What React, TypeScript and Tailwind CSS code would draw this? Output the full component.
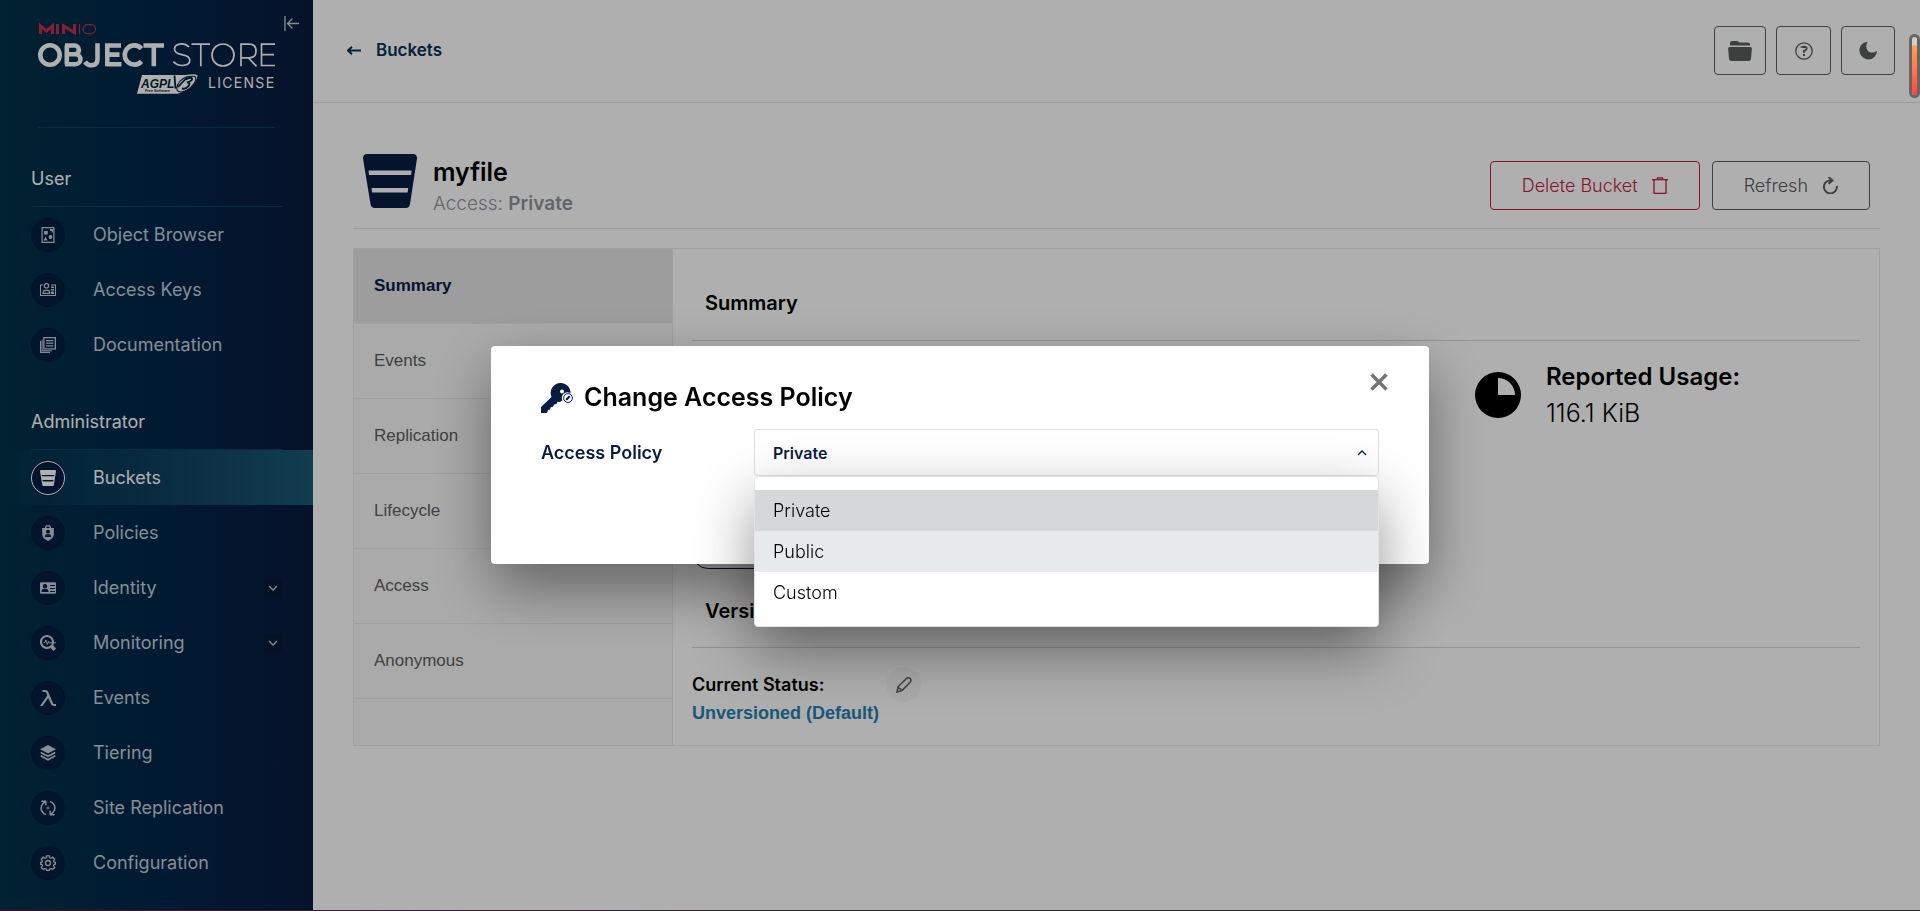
import { useState, type ReactNode } from "react";

const NAVY = "#081C42";

function BucketIcon({ className }: { className?: string }) {
  return (
    <svg viewBox="0 0 54 54" className={className} fill="currentColor" aria-hidden="true">
      <path
        fillRule="evenodd"
        d="M4 0h46a4 4 0 0 1 4 4.500L47 50a4.500 4.500 0 0 1-4.500 4H12a4.500 4.500 0 0 1-4.500-4L0 4.500A4 4 0 0 1 4 0ZM5.500 16.500l.6 4.500h42l.6-4.500ZM8.500 34l.6 4.500h35.500l.6-4.500Z"
      />
    </svg>
  );
}

function Svg({ children, className = "size-4", box = "0 0 16 16" }: { children: ReactNode; className?: string; box?: string }) {
  return (
    <svg viewBox={box} className={className} fill="currentColor" aria-hidden="true">
      {children}
    </svg>
  );
}

const icons: Record<string, ReactNode> = {
  "Object Browser": (
    <Svg>
      <path fillRule="evenodd" d="M1.500 0h13v16h-13ZM2.700 1.200v13.600h10.600V1.200Z" />
      <path d="M4 4h3.800v3.500H4ZM3.500 13.500l2-3.700 2 3.700ZM10 2h3v3.500h-1.200V4H10Z" />
      <circle cx="10.500" cy="10" r="1.900" />
    </Svg>
  ),
  "Access Keys": (
    <Svg>
      <path d="M0 2.500h3v1H1v9.500h14V3.500h-4v-1h5V14H0Z" />
      <path fillRule="evenodd" d="M6.500 1a2.800 2.800 0 1 1 0 5.600 2.800 2.800 0 0 1 0-5.600Zm0 1.200a1.600 1.600 0 1 0 0 3.200 1.600 1.600 0 0 0 0-3.200ZM2.500 12V10q.5-2.200 2.500-2.200h3q2 0 2.300 2.200v2Zm1.200-1.200H9q0-1.800-1.200-1.800H5.200q-1.500 0-1.500 1.800Z" />
      <path d="M11 4.500h3V6h-3ZM11 7h3v1.500h-3ZM11 9.500h3V12h-3Z" />
    </Svg>
  ),
  Documentation: (
    <Svg>
      <path fillRule="evenodd" d="M3.200 0H16v12.500H3.200ZM4.500 1.300v9.900h10.200V1.300Z" />
      <path d="M6 3h7.300v1.200H6ZM6 5.600h7.300v1.200H6ZM6 8.200h7.300v1.200H6ZM0 4h1.200v10.800H10V16H0ZM1.700 2.500H2.600v10.800H12v1H1.700Z" />
    </Svg>
  ),
  Buckets: <BucketIcon className="size-4" />,
  Policies: (
    <Svg>
      <path d="M5 3.500V3a3 3 0 0 1 6 0v.5H9.800V3a1.800 1.800 0 0 0-3.600 0v.5Z" />
      <path fillRule="evenodd" d="M2.200 3h11.600v6.500c0 3-2.500 5-5.800 6.500-3.300-1.500-5.800-3.500-5.800-6.500ZM8 4.800a2 2 0 1 0 0 4 2 2 0 0 0 0-4ZM4.800 12h6.400q0-2.500-1.700-2.700h-3Q4.800 9.500 4.800 12Z" />
    </Svg>
  ),
  Identity: (
    <Svg>
      <path fillRule="evenodd" d="M1 2.200h14a1 1 0 0 1 1 1v9.600a1 1 0 0 1-1 1H1a1 1 0 0 1-1-1V3.200a1 1 0 0 1 1-1ZM5 4a2.200 2.200 0 1 0 0 4.400A2.200 2.200 0 0 0 5 4ZM1.500 12h7q0-3-2-3h-3q-2 0-2 3ZM10 5v1h5V5Zm0 3v1h5V8Zm0 3v1h5v-1Z" />
    </Svg>
  ),
  Monitoring: (
    <Svg>
      <path fillRule="evenodd" d="M7 0a7 7 0 0 1 6.200 10.200L16 13.500 13.700 16l-3.200-3A7 7 0 1 1 7 0Zm0 2a5 5 0 1 0 0 10A5 5 0 0 0 7 2Z" />
      <path d="M3.500 7.500h1.300L6 5l1.300 4.500 1.400-3 .7 1.300H16" fill="none" stroke="currentColor" />
    </Svg>
  ),
  Events: (
    <Svg>
      <path d="M2.500 0H6q1.300 0 2 1.600l4.800 11.200q.4 1.200 1.600 1.200H16v2h-2.500q-1.700 0-2.500-1.800L8.200 8 2.500 16H0L7.200 5.600 6.400 3q-.4-1-1.400-1H2.500Z" />
    </Svg>
  ),
  Tiering: (
    <Svg>
      <path d="M8 0l8 4.200-8 4.300-8-4.300Z" />
      <path d="M.8 7.500 8 11.300l7.200-3.800M.8 10.800 8 14.800l7.200-4" fill="none" stroke="currentColor" strokeWidth="1.600" />
    </Svg>
  ),
  "Site Replication": (
    <Svg>
      <path d="M6 14.500C2 13.500 0 9 1.800 5.500 2.500 4 3.500 3 4.800 2.200M10 1.500c4 1 6 5.500 4.200 9-.7 1.500-1.700 2.500-3 3.300M1.500 1.200h4.300v4M14.500 14.800h-4.300v-4" fill="none" stroke="currentColor" strokeWidth="1.500" />
      <path d="M7.500 6.500h1v1h1v1h-1v1h-1v-1h-1v-1h1Z" />
    </Svg>
  ),
  Configuration: (
    <Svg>
      <g fill="none" stroke="currentColor" strokeWidth="1.300">
        <circle cx="8" cy="8" r="2.500" />
        <path d="M6.600 .8h2.800l.4 2 1.200.5 1.700-1.100 2 2-1.100 1.700.5 1.200 1.300.3v1.800l-1.300.4-.5 1.200 1.100 1.700-2 2-1.700-1.100-1.200.5-.4 1.500H6.600l-.4-1.500-1.200-.5-1.700 1.100-2-2 1.100-1.700-.5-1.200L.6 9.200V7.400l1.300-.3.5-1.200-1.100-1.700 2-2L5 3.300l1.200-.5Z" />
      </g>
    </Svg>
  ),
};

function NavItem({ name, active, expandable }: { name: string; active?: boolean; expandable?: boolean }) {
  return (
    <a
      href="#"
      className={
        active
          ? "flex h-[55px] items-center bg-linear-to-r from-[#1a5a7400] to-[#1a5a74] px-[31px] text-white"
          : "flex h-[55px] items-center px-[31px] text-[#c4cedb]"
      }
    >
      <span
        className={
          active
            ? "flex size-[34px] items-center justify-center rounded-full border border-white bg-[#021c44]"
            : "flex size-[34px] items-center justify-center rounded-full border border-[#041a3a] bg-[#041f42]"
        }
      >
        {icons[name]}
      </span>
      <span className="ml-7 flex-1 text-lg">{name}</span>
      {expandable && (
        <span className="flex size-[18px] items-center justify-center rounded-xs bg-[#081a37]">
          <Svg className="size-[10px]" box="0 0 10 10">
            <path d="M1 3l4 4 4-4" fill="none" stroke="currentColor" strokeWidth="1.300" />
          </Svg>
        </span>
      )}
    </a>
  );
}

function Logo() {
  return (
    <svg viewBox="0 0 237 72" className="h-[72px] w-full overflow-visible" role="img" aria-label="MinIO Object Store AGPL v3 License">
      <g fill="none" stroke="#c72c48">
        <path strokeWidth="3" d="M2.500 10V2l6 5 6-5v8M19.500 0v10M25.500 10V2l11 6.500V0" />
        <path strokeWidth="1" d="M41.500 0v10" />
        <rect x="45" y=".6" width="12.500" height="9" rx="4.500" strokeWidth="1.200" />
      </g>
      <g fill="none" stroke="#fff" strokeWidth="4.600">
        <circle cx="12" cy="31" r="9.700" />
        <path d="M28.800 21.500v19M27 21.500h9.500a4.300 4.300 0 0 1 0 8.800H28h9.500a4.700 4.700 0 0 1 0 9.900H27M59.500 19.300v16q0 6-6 6-4 0-6.500-3.500M69.300 19.300v23M83 21.500H69M81.500 30.600H69M83.500 40.200H69M103.500 24.600a9.600 9.600 0 1 0 0 12.800M105.500 21.500h20.500M115.800 21.500v20.800" />
      </g>
      <g fill="none" stroke="#fff" strokeWidth="1.700">
        <path d="M151 23q-3-3.300-7.500-3.200-7 .3-7 5.300 0 4.300 7.300 5.500 8 1.200 8 5.700 0 5-7.500 5.200-5.500 0-9-4M153.500 20.200h18.500M162.800 20.200v22M203 42.300V20.200h8q7 0 7 6.800t-7 6.800h-8M210.500 34l8 8.300M237 20.200h-13.500v21.300H237M223.500 30.600H236" />
        <circle cx="185" cy="31" r="11" />
      </g>
      <path fill="#fff" d="M104 51h43q13-2 12.500 1-3 14-20 17.700H99Z" />
      <text x="103" y="63.500" fill="#001c38" fontFamily="Liberation Sans, sans-serif" fontSize="12" fontStyle="italic" fontWeight="700">
        AGPL
      </text>
      <path fill="none" stroke="#001c38" strokeWidth="1.800" d="M136.500 51.500l1 13M140 63l9-9.500" />
      <path fill="none" stroke="#001c38" strokeWidth="1.100" d="M157 52.500q-12-2-17.500 8.500-2.500 7 3.500 7 7-.5 13-8.500 3-5 1-7" />
      <path fill="none" stroke="#001c38" strokeWidth="1.900" d="M147.500 55.500q6-3 6.500-.8t-5 3.700q4 .2 1.500 3.600t-6.500 2.500" />
      <text x="107" y="68.300" fill="#001c38" fontFamily="Liberation Sans, sans-serif" fontSize="3.800" fontWeight="700">
        Free Software
      </text>
      <text x="170" y="64" fill="#fff" fontFamily="Inter, sans-serif" fontSize="14" letterSpacing="1.300">
        LICENSE
      </text>
    </svg>
  );
}

function Sidebar() {
  return (
    <aside className="flex w-[313px] shrink-0 flex-col bg-linear-to-r from-[#00324a] via-[#00264a] to-[#0a1b3e]">
      <div className="relative px-[38px] pt-6">
        <Logo />
        <button type="button" aria-label="Collapse menu" className="absolute top-4 right-[14px] text-[#c4cedb]">
          <Svg className="size-[15px]" box="0 0 15 15">
            <path d="M1 0v15M3.500 7.500H15M8.500 2.500l-5 5 5 5" fill="none" stroke="currentColor" strokeWidth="1.300" />
          </Svg>
        </button>
        <hr className="mt-[31px] border-[#0a4262]" />
      </div>
      <nav>
        <h2 className="mx-[31px] mt-[38px] h-[41px] border-b border-[#0a4262] text-lg leading-[26px] text-white">User</h2>
        <NavItem name="Object Browser" />
        <NavItem name="Access Keys" />
        <NavItem name="Documentation" />
        <h2 className="mx-[31px] mt-9 h-[42px] border-b border-[#0a4262] text-lg leading-[27px] text-white">Administrator</h2>
        <NavItem name="Buckets" active />
        <NavItem name="Policies" />
        <NavItem name="Identity" expandable />
        <NavItem name="Monitoring" expandable />
        <NavItem name="Events" />
        <NavItem name="Tiering" />
        <NavItem name="Site Replication" />
        <NavItem name="Configuration" />
      </nav>
    </aside>
  );
}

function TopBar() {
  const button = "flex h-[49px] items-center justify-center rounded-sm border border-[#5e5e5e] text-[#5a5c5c]";
  return (
    <header className="flex h-[103px] items-center justify-between border-b border-[#e2e2e2] pr-[25px] pb-px pl-[34px]">
      <a href="#" className="flex items-center gap-[15px] text-[17px] font-semibold text-[#073052]">
        <Svg className="h-[9px] w-[14px]" box="0 0 14 9">
          <path d="M1 4.500h13M5 .8l-4 3.700 4 3.700" fill="none" stroke="currentColor" strokeWidth="2" />
        </Svg>
        Buckets
      </a>
      <div className="flex gap-[10px]">
        <button type="button" aria-label="Downloads" className={`w-[52px] ${button}`}>
          <Svg className="h-[20px] w-6" box="0 0 24 20">
            <path d="M2 4.500V2Q2.200 0 4 0h5q1.500 0 2 1.500h9q2 0 2.200 3Z" />
            <path d="M1.500 6h21q1.500 0 1.400 1.500L23 18q-.2 2-2 2H3.200q-2 0-2.200-2L.1 7.500Q0 6 1.500 6Z" />
          </Svg>
        </button>
        <button type="button" aria-label="Help" className={`w-[55px] ${button}`}>
          <Svg className="size-[18px]" box="0 0 18 18">
            <circle cx="9" cy="9" r="8.200" fill="none" stroke="currentColor" strokeWidth="1.300" />
            <path d="M6.500 5.700q0-.8 2.500-.9 2.800 0 2.600 2-.1 1.400-2.600 2.200v1.700" fill="none" stroke="currentColor" strokeWidth="2" />
            <path d="M8 12h2v2H8Z" />
          </Svg>
        </button>
        <button type="button" aria-label="Dark mode" className={`w-[54px] ${button}`}>
          <Svg className="size-[18px]" box="0 0 18 18">
            <path d="M8.500 0C0 .5-2 10 3.500 15c5 4.800 13.500 2.500 14.500-6C9.500 14 5 6 8.500 0Z" />
          </Svg>
        </button>
      </div>
    </header>
  );
}

const tabs = ["Summary", "Events", "Replication", "Lifecycle", "Access", "Anonymous"];

function BucketDetails() {
  return (
    <main className="px-10 pt-[51px]">
      <div className="flex h-[75px] items-start border-b border-[#e2e2e2] pr-[10px] pl-[10px] text-[#081C42]">
        <BucketIcon className="size-[54px]" />
        <div className="ml-4 flex-1">
          <h1 className="text-[25px] leading-9 font-semibold text-black">myfile</h1>
          <p className="text-[19px] leading-7 font-light text-[#8f959b]">
            Access: <span className="font-semibold">Private</span>
          </p>
        </div>
        <div className="mt-[7px] flex gap-3 text-lg font-light">
          <button type="button" className="flex h-[49px] items-center gap-[14px] rounded-sm border border-[#c51b3f] px-[31px] text-[#c51b3f]">
            Delete Bucket
            <Svg className="h-[17px] w-4" box="0 0 16 17">
              <path d="M0 2.700h16M2 3v13.400h12V3M5.500 2.500V.8h5v1.700" fill="none" stroke="currentColor" strokeWidth="1.300" />
            </Svg>
          </button>
          <button type="button" className="flex h-[49px] items-center gap-[14px] rounded-sm border border-[#5e5e5e] px-[31px] text-[#5a5c5c]">
            Refresh
            <Svg className="h-[17px] w-4" box="0 0 16 17">
              <path d="M9.500 3.400H8A6.500 6.500 0 1 0 14.800 9M6.500 0l4 3.400-4 3.400" fill="none" stroke="currentColor" strokeWidth="1.900" />
            </Svg>
          </button>
        </div>
      </div>

      <div className="mt-[19px] flex border border-[#eaeaea]">
        <div
          className="flex w-[319px] shrink-0 flex-col border-r border-[#eaeaea] bg-[#f8f8f8] font-['Liberation_Sans',sans-serif] text-[17px] text-[#5e5e5e]"
          role="tablist"
        >
          {tabs.map((tab, i) => (
            <button
              key={tab}
              type="button"
              role="tab"
              aria-selected={i === 0}
              className={
                i === 0
                  ? "h-[75px] border-b border-[#eaeaea] bg-[#e5e5e5] px-5 text-left font-bold text-[#081C42]"
                  : "h-[75px] border-b border-[#eaeaea] px-5 text-left"
              }
            >
              {tab}
            </button>
          ))}
        </div>
        <div className="flex-1 px-[19px] pt-[35px] pb-[18px]">
          <h2 className="h-[57px] border-b border-[#d8d8d8] px-[13px] text-xl leading-[38px] font-semibold">Summary</h2>
          <div className="flex h-[228px] flex-col justify-between">
            <section className="ml-auto flex w-[385px] items-center gap-[25px] pt-[18px]">
              <Svg className="size-[46px]" box="0 0 46 46">
                <path fillRule="evenodd" d="M23 0a23 23 0 1 1 0 46 23 23 0 0 1 0-46Zm0 6v17h17A17 17 0 0 0 23 6Z" />
              </Svg>
              <div className="leading-9">
                <h3 className="text-2xl leading-9 font-semibold">Reported Usage:</h3>
                <p className="text-[25px] leading-9 font-light">116.1 KiB</p>
              </div>
            </section>
            <button type="button" aria-label="Add tag" className="h-8 w-[120px] rounded-full border border-[#081C42]" />
          </div>
          <h2 className="mt-[23px] h-14 border-b border-[#d8d8d8] px-[13px] text-xl leading-[38px] font-semibold">Versioning</h2>
          <section className="flex items-start pt-[19px] text-lg leading-7">
            <div className="w-[194px] pt-1">
              <h3 className="font-semibold">Current Status:</h3>
              <a href="#" className="font-['Liberation_Sans',sans-serif] font-bold text-[#2781b0]">
                Unversioned (Default)
              </a>
            </div>
            <button type="button" aria-label="Edit versioning" className="flex size-[35px] items-center justify-center rounded-full bg-[#f8f8f8] text-[#5e5e5e]">
              <Svg className="size-4">
                <path d="M1 15l1-5.200L10.500 1.500a2.500 2.500 0 0 1 3.700 3.700L6 13.500ZM2.200 10.200l3.500 3" fill="none" stroke="currentColor" strokeWidth="1.500" />
              </Svg>
            </button>
          </section>
        </div>
      </div>
    </main>
  );
}

const options = ["Private", "Public", "Custom"];

function AccessPolicyDialog() {
  const [policy, setPolicy] = useState("Private");
  return (
    <div role="dialog" aria-modal="true" aria-labelledby="dialog-title" className="relative h-[218px] w-[938px] rounded-sm bg-white px-[50px] pt-8 shadow-[0_24px_60px_#0000006b]">
      <button type="button" aria-label="Close" className="absolute top-[27px] right-[41px] text-[#757575]">
        <Svg className="size-[18px]" box="0 0 18 18">
          <path d="M1.500 1.500l15 15M16.500 1.500l-15 15" fill="none" stroke="currentColor" strokeWidth="3.500" />
        </Svg>
      </button>
      <h2 id="dialog-title" className="flex h-10 items-center gap-[11px] text-[25px] font-semibold">
        <svg viewBox="0 0 32 30" className="h-[30px] w-8" fill={NAVY} aria-hidden="true">
          <path d="M19.500 0a10 10 0 0 1 9.800 12.500L19 19l-2.500-.3-1 2.300-2.500.5-1 2.300-2.300.5-.7 2.300-2 .4L6 30H0v-6l10.500-10A10 10 0 0 1 19.500 0Zm1.500 6.500a2 2 0 1 0 .1 0Z" />
          <circle cx="26.500" cy="15" r="5.700" fill="#fff" />
          <circle cx="27" cy="15" r="4.400" fill="#fff" stroke={NAVY} />
          <path d="M24.500 17.500l.5-2 3-3 1.500 1.500-3 3Z" />
        </svg>
        Change Access Policy
      </h2>
      <div className="mt-[11px] flex h-[47px] items-center text-[#081C42]">
        <label htmlFor="access-policy" className="w-[213px] text-lg font-semibold">
          Access Policy
        </label>
        <div className="relative flex-1">
          <button
            id="access-policy"
            type="button"
            aria-haspopup="listbox"
            aria-expanded="true"
            className="flex h-[47px] w-full items-center justify-between rounded-[3px] border border-[#e2e2e2] bg-white pr-[11px] pl-[18px] text-base font-semibold"
          >
            {policy}
            <Svg className="size-[10px]" box="0 0 10 10">
              <path d="M1 7l4-4 4 4" fill="none" stroke="currentColor" strokeWidth="1.300" />
            </Svg>
          </button>
          <ul role="listbox" aria-label="Access Policy" className="absolute top-full left-0 w-full rounded-sm border border-[#e2e2e2] bg-white pt-[13px] pb-[13px] text-lg font-light text-black shadow-[0_24px_60px_#0000006b]">
            {options.map((option) => (
              <li
                key={option}
                role="option"
                aria-selected={option === policy}
                onClick={() => setPolicy(option)}
                className={
                  option === policy
                    ? "flex h-[41px] items-center bg-[#d5d7d9] px-[18px]"
                    : option === "Public"
                      ? "flex h-[41px] items-center bg-[#e6eaeb] px-[18px]"
                      : "flex h-[41px] items-center px-[18px]"
                }
              >
                {option}
              </li>
            ))}
          </ul>
        </div>
      </div>
    </div>
  );
}

export default function App() {
  return (
    <div className="flex min-h-screen bg-white font-['Inter',sans-serif] text-black">
      <Sidebar />
      <div className="min-w-0 flex-1">
        <TopBar />
        <BucketDetails />
      </div>
      <div className="fixed inset-0 flex items-center justify-center bg-[#00000050] pb-px">
        <AccessPolicyDialog />
      </div>
      <div className="fixed top-[34px] right-0 h-16 w-[11px] rounded-full border-3 border-[#666] bg-[#d0d0d0] pt-2">
        <div className="h-full rounded-full bg-linear-to-b from-[#ffa050] to-[#ff4040]" />
      </div>
      <div className="fixed inset-x-0 bottom-0 h-px bg-linear-to-r from-[#3d0a35] to-[#2a2a2a] to-40%" />
    </div>
  );
}
